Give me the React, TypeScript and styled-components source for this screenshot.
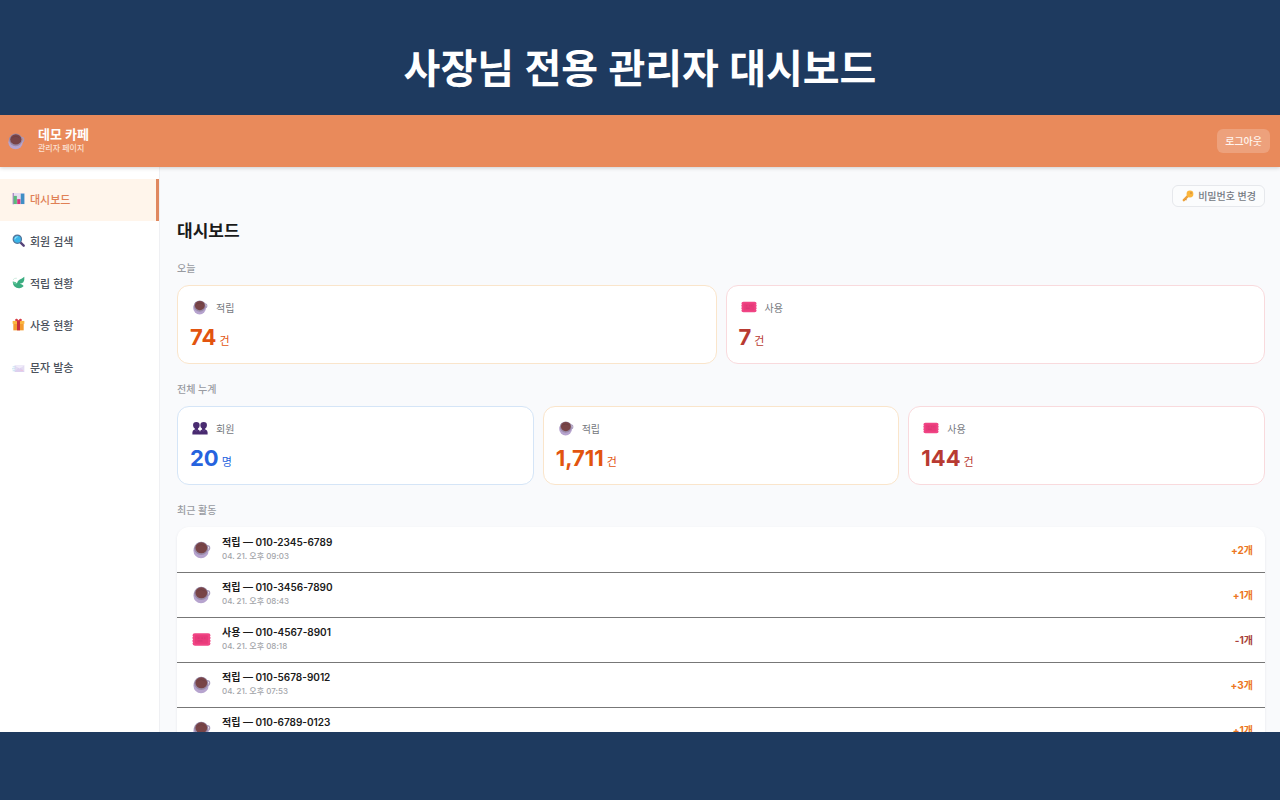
import React from "react";
import styled, { createGlobalStyle } from "styled-components";

const GlobalStyle = createGlobalStyle`
  *, *::before, *::after { box-sizing: border-box; }
  body {
    margin: 0;
    background: #1e3a5f;
    font-family: Inter, "Noto Sans CJK KR", sans-serif;
    color: #1a1a1a;
  }
  h1, h2, p, ul { margin: 0; padding: 0; }
  ul { list-style: none; }
  button { font-family: inherit; cursor: pointer; }
`;

const Page = styled.div`
  display: grid;
  grid-template-rows: 115px minmax(0, 1fr) 68px;
  height: 100vh;
  background: #1e3a5f;
`;

const Banner = styled.header`
  display: flex;
  align-items: center;
  justify-content: center;
  padding-top: 20px;
`;

const BannerTitle = styled.h1`
  font-family: "Noto Sans", "Noto Sans CJK KR", sans-serif;
  font-size: 40px;
  line-height: 60px;
  font-weight: 700;
  color: #fff;
`;

const AppFrame = styled.div`
  display: flex;
  flex-direction: column;
  min-height: 0;
  overflow: hidden;
  background: #f9fafc;
`;

const TopBar = styled.header`
  display: flex;
  flex: none;
  align-items: center;
  gap: 13px;
  height: 52px;
  padding: 0 10px 0 7px;
  background: #e98a5b;
  box-shadow: 0 1px 4px rgba(0, 0, 0, 0.18);
  z-index: 1;
`;

const Brand = styled.div`
  flex: 1;
  padding-bottom: 2px;
  color: #fff;
`;

const BrandName = styled.p`
  font-size: 13px;
  line-height: 16px;
  font-weight: 700;
`;

const BrandNote = styled.p`
  font-size: 8px;
  line-height: 12px;
  font-weight: 500;
  color: #fbe0d2;
`;

const LogoutButton = styled.button`
  height: 24px;
  padding: 0 8px 2px;
  border: 0;
  border-radius: 6px;
  background: #eda17c;
  color: #fff5ef;
  font-size: 10px;
  font-weight: 500;
`;

const Body = styled.div`
  display: flex;
  flex: 1;
  min-height: 0;
`;

const Sidebar = styled.nav`
  flex: none;
  width: 160px;
  padding-top: 12px;
  border-right: 1px solid #eff0f3;
  background: #fff;
`;

const NavLink = styled.a<{ $active?: boolean }>`
  display: flex;
  align-items: center;
  gap: 5px;
  height: 42px;
  padding: 0 0 3px 12px;
  border-right: 3px solid ${(p) => (p.$active ? "#e0885f" : "transparent")};
  background: ${(p) => (p.$active ? "#fff5eb" : "transparent")};
  color: ${(p) => (p.$active ? "#e08055" : "#4b515b")};
  font-size: 11px;
  font-weight: 500;
  text-decoration: none;
`;

const Main = styled.main`
  flex: 1;
  min-width: 0;
  padding: 18px 15px 0 17px;
  overflow: hidden;
`;

const Toolbar = styled.div`
  display: flex;
  justify-content: flex-end;
`;

const PasswordButton = styled.button`
  display: flex;
  align-items: center;
  gap: 4px;
  height: 22px;
  padding: 0 8px 1px 9px;
  border: 1px solid #e6e8ec;
  border-radius: 6px;
  background: #fbfcfd;
  color: #747982;
  font-size: 10px;
  font-weight: 500;
`;

const PageTitle = styled.h2`
  margin: 12px 0 17px;
  font-size: 17px;
  line-height: 24px;
  font-weight: 700;
`;

const Section = styled.section`
  margin-bottom: 17px;
`;

const SectionLabel = styled.p`
  margin-bottom: 9px;
  color: #989ba1;
  font-size: 10px;
  line-height: 16px;
  font-weight: 500;
`;

const CardGrid = styled.div<{ $columns: number }>`
  display: grid;
  grid-template-columns: repeat(${(p) => p.$columns}, minmax(0, 1fr));
  gap: 9px;
`;

const Card = styled.article<{ $border: string }>`
  height: 79px;
  padding: 11px 12px;
  border: 1px solid ${(p) => p.$border};
  border-radius: 12px;
  background: #fff;
`;

const CardHead = styled.div`
  display: flex;
  align-items: center;
  gap: 6px;
  height: 20px;
  color: #74777d;
  font-size: 10px;
`;

const Figure = styled.p<{ $color: string }>`
  display: flex;
  align-items: baseline;
  gap: 3px;
  margin-top: 6px;
  color: ${(p) => p.$color};
  font-size: 22px;
  line-height: 28px;
  font-weight: 700;
`;

const Unit = styled.span`
  font-size: 11px;
  font-weight: 400;
`;

const ActivityList = styled.ul`
  padding-top: 1px;
  border-radius: 12px;
  background: #fff;
  box-shadow: 0 1px 3px rgba(20, 30, 50, 0.08);
`;

const ActivityRow = styled.li`
  display: flex;
  align-items: center;
  gap: 10px;
  height: 45px;
  padding: 0 12px 2px 13px;
  border-bottom: 1px solid #777;
`;

const ActivityText = styled.div`
  flex: 1;
`;

const ActivityTitle = styled.p`
  font-size: 10px;
  line-height: 14px;
  font-weight: 600;
`;

const ActivityTime = styled.p`
  color: #a3a5aa;
  font-size: 8px;
  line-height: 14px;
  font-weight: 500;
`;

const Delta = styled.span<{ $used: boolean }>`
  color: ${(p) => (p.$used ? "#a83f3a" : "#ec7622")};
  font-size: 10px;
  font-weight: 700;
`;

const IconSlot = styled.span<{ $width: number }>`
  display: flex;
  flex: none;
  justify-content: center;
  width: ${(p) => p.$width}px;
`;

type IconProps = { size: number };

const Coffee = ({ size }: IconProps) => (
  <svg width={size} height={size} viewBox="0 0 20 20" aria-hidden="true">
    <circle cx="16" cy="8.5" r="2.6" fill="none" stroke="#a99bbd" strokeWidth="1.3" />
    <circle cx="9.5" cy="11.3" r="8" fill="#b6a3ce" />
    <ellipse cx="9.7" cy="8.8" rx="7.4" ry="7" fill="#998aa8" />
    <ellipse cx="9.8" cy="8.2" rx="6.2" ry="5.8" fill="#784447" />
    <path d="M5 7.6a5 4.2 0 0 1 9.4-.2 6 6 0 0 0-9.4.2" fill="#643b43" />
  </svg>
);

const Ticket = ({ size }: IconProps) => (
  <svg width={size} height={size} viewBox="0 0 20 20" aria-hidden="true">
    <path
      d="M3 3.500H17Q19.500 3.500 19.500 6Q18 6.700 19.500 7.600V9Q18 9.900 19.500 10.800V12.200Q18 13 19.500 14Q19.500 16.500 17 16.500H3Q.5 16.500 .5 14Q2 13 .5 12.200V10.800Q2 9.900 .5 9V7.600Q2 6.700 .5 6Q.5 3.500 3 3.500Z"
      fill="#f04585"
    />
    <rect x="3.200" y="5.600" width="13.600" height="8.800" rx="1" fill="#e93b7b" />
    <path d="M6 8.500h2M10 8.500h1.500M13 8.500h1M6 11.500h5" stroke="#c93571" strokeWidth=".7" />
  </svg>
);

const People = ({ size }: IconProps) => (
  <svg width={size} height={size} viewBox="0 0 20 20" aria-hidden="true">
    <g fill="#492b70">
      <path d="M.5 18v-2.800q0-2.500 3-3.200v-1.500Q1.300 9.500 1.300 6.500 1.300 2.500 5.400 2.500t4.200 4Q9.600 9.500 7.500 10.500V12q2.600.7 2.600 3.200V18z" />
      <path d="M9.900 18v-2.800q0-2.500 2.600-3.200v-1.500q-2.100-1-2.100-4 0-4 4.200-4t4.100 4q0 3-2.200 4V12q3 .7 3 3.200V18z" />
    </g>
    <path d="M3.700 12.300l1.800 1.400 1.800-1.400M12.700 12.300l1.800 1.400 1.800-1.400" fill="none" stroke="#7655a0" strokeWidth=".8" />
  </svg>
);

const Chart = ({ size }: IconProps) => (
  <svg width={size} height={size} viewBox="0 0 20 20" aria-hidden="true">
    <path d="M1 1.500h18.500v17.500H1z" fill="#e6dcef" />
    <path d="M1 1.500h2v17.500H1z" fill="#a98ac5" />
    <path d="M2.500 6h5v12.500h-5z" fill="#5cba7c" />
    <path d="M8 11h5v7.500H8z" fill="#d83480" />
    <path d="M13.500 2.500h5.500v16h-5.500z" fill="#3f8fc4" />
  </svg>
);

const Magnifier = ({ size }: IconProps) => (
  <svg width={size} height={size} viewBox="0 0 20 20" aria-hidden="true">
    <path d="M12.500 12.500l5.500 5.500" stroke="#564379" strokeWidth="3.600" strokeLinecap="round" />
    <circle cx="8.200" cy="8" r="6.400" fill="#39b4e8" stroke="#557398" strokeWidth="1.800" />
    <path d="M4.500 7.500q.7-3 3.700-3.300" fill="none" stroke="#9be3fb" strokeWidth="1.600" strokeLinecap="round" />
  </svg>
);

const Sprout = ({ size }: IconProps) => (
  <svg width={size} height={size} viewBox="0 0 20 20" aria-hidden="true">
    <path d="M1 9q4.500-1 6.500 2.500Q8.500 7 12 5.500 15 4 19 1q.5 6-1.500 8.500-2 2-5.500 2.500 4 .5 6 3.500-2.500 3.500-7 3.300Q2 19 1 9z" fill="#3bad80" />
    <path d="M1 9q4.500-1 6.500 2.500L6.500 13Q2 13 1 9z" fill="#63c69a" />
    <path d="M1.500 6q2.500-3.500 6-2.500" fill="none" stroke="#b7e2cf" />
  </svg>
);

const Gift = ({ size }: IconProps) => (
  <svg width={size} height={size} viewBox="0 0 20 20" aria-hidden="true">
    <path d="M2 8h16v11H2z" fill="#f49b2f" />
    <path d="M1 4.500h18V9H1z" fill="#fbb63f" />
    <path d="M7.700 4h4.600v15H7.700z" fill="#c92c3c" />
    <path d="M10 5Q6 5.500 4.500 3.500 5 .5 7.500 1.300 9.300 2 10 4q.7-2 2.500-2.700 2.500-.8 3 2.200Q14 5.500 10 5z" fill="#d73b43" />
  </svg>
);

const Mail = ({ size }: IconProps) => (
  <svg width={size} height={size} viewBox="0 0 20 20" aria-hidden="true">
    <path d="M4 8h15v10.500H4z" fill="#e3dcf2" />
    <path d="M4 8l7.500 5.500L19 8z" fill="#f1ecfa" />
    <path d="M4 18.500l5.500-6.500 2 1.500 2-1.500 5.500 6.500z" fill="#ddd0ef" />
    <path d="M1 10.500h4M0 13.500h5M1 16.500h4" stroke="#b8d8ed" strokeWidth="1.200" />
    <path d="M13 16h4" stroke="#eec2dc" strokeWidth="1.500" />
  </svg>
);

const Key = ({ size }: IconProps) => (
  <svg width={size} height={size} viewBox="0 0 20 20" aria-hidden="true">
    <path d="M10.500 9.500L3 17" stroke="#eca13b" strokeWidth="4" strokeLinecap="round" />
    <path d="M6 15.500l1.500 1.500" stroke="#d9852d" strokeWidth="1.800" />
    <circle cx="13.300" cy="6.700" r="5.700" fill="#fbb53c" />
    <circle cx="15" cy="4.900" r="1.200" fill="#b97a3c" />
  </svg>
);

const navItems = [
  { label: "대시보드", Icon: Chart, active: true },
  { label: "회원 검색", Icon: Magnifier },
  { label: "적립 현황", Icon: Sprout },
  { label: "사용 현황", Icon: Gift },
  { label: "문자 발송", Icon: Mail },
];

const kinds = {
  earn: { label: "적립", Icon: Coffee, color: "#e2540f", border: "#fae5cb" },
  use: { label: "사용", Icon: Ticket, color: "#b83a32", border: "#f9dadd" },
  member: { label: "회원", Icon: People, color: "#2563de", border: "#d5e5f7" },
};

type StatProps = { kind: keyof typeof kinds; value: string; unit: string };

const Stat = ({ kind, value, unit }: StatProps) => {
  const { label, Icon, color, border } = kinds[kind];
  return (
    <Card $border={border}>
      <CardHead>
        <IconSlot $width={20}>
          <Icon size={16} />
        </IconSlot>
        {label}
      </CardHead>
      <Figure $color={color}>
        {value}
        <Unit>{unit}</Unit>
      </Figure>
    </Card>
  );
};

const activities: { kind: "earn" | "use"; phone: string; time: string; delta: string }[] = [
  { kind: "earn", phone: "010-2345-6789", time: "04. 21. 오후 09:03", delta: "+2개" },
  { kind: "earn", phone: "010-3456-7890", time: "04. 21. 오후 08:43", delta: "+1개" },
  { kind: "use", phone: "010-4567-8901", time: "04. 21. 오후 08:18", delta: "-1개" },
  { kind: "earn", phone: "010-5678-9012", time: "04. 21. 오후 07:53", delta: "+3개" },
  { kind: "earn", phone: "010-6789-0123", time: "04. 21. 오후 07:28", delta: "+1개" },
];

export default function App() {
  return (
    <Page>
      <GlobalStyle />
      <Banner>
        <BannerTitle>사장님 전용 관리자 대시보드</BannerTitle>
      </Banner>
      <AppFrame>
        <TopBar>
          <Coffee size={18} />
          <Brand>
            <BrandName>데모 카페</BrandName>
            <BrandNote>관리자 페이지</BrandNote>
          </Brand>
          <LogoutButton type="button">로그아웃</LogoutButton>
        </TopBar>
        <Body>
          <Sidebar>
            {navItems.map(({ label, Icon, active }) => (
              <NavLink key={label} href="#" $active={active}>
                <Icon size={13} />
                {label}
              </NavLink>
            ))}
          </Sidebar>
          <Main>
            <Toolbar>
              <PasswordButton type="button">
                <Key size={12} />
                비밀번호 변경
              </PasswordButton>
            </Toolbar>
            <PageTitle>대시보드</PageTitle>
            <Section>
              <SectionLabel>오늘</SectionLabel>
              <CardGrid $columns={2}>
                <Stat kind="earn" value="74" unit="건" />
                <Stat kind="use" value="7" unit="건" />
              </CardGrid>
            </Section>
            <Section>
              <SectionLabel>전체 누계</SectionLabel>
              <CardGrid $columns={3}>
                <Stat kind="member" value="20" unit="명" />
                <Stat kind="earn" value="1,711" unit="건" />
                <Stat kind="use" value="144" unit="건" />
              </CardGrid>
            </Section>
            <Section>
              <SectionLabel>최근 활동</SectionLabel>
              <ActivityList>
                {activities.map(({ kind, phone, time, delta }) => {
                  const { label, Icon } = kinds[kind];
                  return (
                    <ActivityRow key={phone}>
                      <IconSlot $width={22}>
                        <Icon size={19} />
                      </IconSlot>
                      <ActivityText>
                        <ActivityTitle>
                          {label} — {phone}
                        </ActivityTitle>
                        <ActivityTime>{time}</ActivityTime>
                      </ActivityText>
                      <Delta $used={kind === "use"}>{delta}</Delta>
                    </ActivityRow>
                  );
                })}
              </ActivityList>
            </Section>
          </Main>
        </Body>
      </AppFrame>
    </Page>
  );
}
